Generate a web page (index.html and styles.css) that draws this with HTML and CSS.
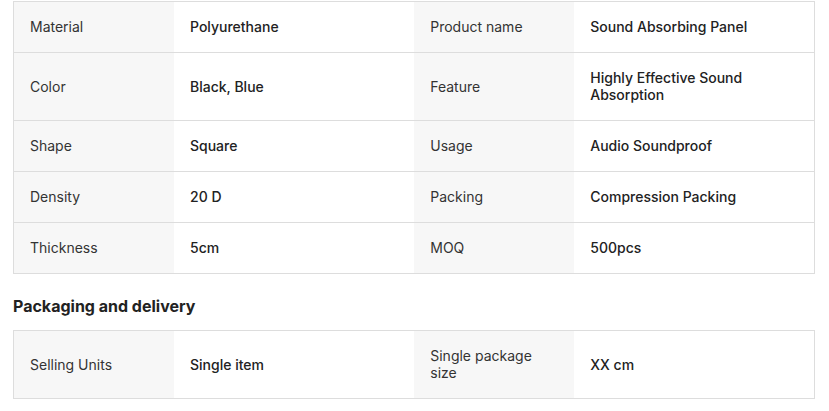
FILE: index.html
```html
<!DOCTYPE html>
<html>
<head>
  <meta charset="utf-8">
  <title>Product Attributes</title>
  <link rel="stylesheet" href="styles.css">
</head>
<body>
  <div class="attributes">
    <table class="spec-table">
      <tr>
        <td class="spec-label">Material</td>
        <td class="spec-value">Polyurethane</td>
        <td class="spec-label">Product name</td>
        <td class="spec-value">Sound Absorbing Panel</td>
      </tr>
      <tr>
        <td class="spec-label">Color</td>
        <td class="spec-value">Black, Blue</td>
        <td class="spec-label">Feature</td>
        <td class="spec-value">Highly Effective Sound Absorption</td>
      </tr>
      <tr>
        <td class="spec-label">Shape</td>
        <td class="spec-value">Square</td>
        <td class="spec-label">Usage</td>
        <td class="spec-value">Audio Soundproof</td>
      </tr>
      <tr>
        <td class="spec-label">Density</td>
        <td class="spec-value">20 D</td>
        <td class="spec-label">Packing</td>
        <td class="spec-value">Compression Packing</td>
      </tr>
      <tr>
        <td class="spec-label">Thickness</td>
        <td class="spec-value">5cm</td>
        <td class="spec-label">MOQ</td>
        <td class="spec-value">500pcs</td>
      </tr>
    </table>

    <h3 class="section-title">Packaging and delivery</h3>

    <table class="spec-table">
      <tr>
        <td class="spec-label">Selling Units</td>
        <td class="spec-value">Single item</td>
        <td class="spec-label">Single package size</td>
        <td class="spec-value">XX cm</td>
      </tr>
    </table>
  </div>
</body>
</html>
```

FILE: styles.css
```css
body {
  font-family: Inter, 'Noto Sans', sans-serif;
  margin: 0;
  padding: 1px 14px 0 13px;
  color: #222;
  background: #fff;
}

.attributes {
  width: 802px;
}

.spec-table {
  width: 100%;
  border-collapse: collapse;
  table-layout: fixed;
  border: 1px solid #ddd;
  font-size: 14px;
  line-height: 17px;
}

.spec-table tr {
  border-bottom: 1px solid #ddd;
}

.spec-table td {
  padding: 16px 16px 17px;
  vertical-align: middle;
}

.spec-label {
  width: 128px;
  background: #f7f7f7;
  color: #333;
}

.spec-value {
  color: #222;
  font-weight: 500;
}

.section-title {
  margin: 20px 0 12px;
  font-size: 16px;
  line-height: 24px;
  font-weight: 700;
  color: #222;
}
```
